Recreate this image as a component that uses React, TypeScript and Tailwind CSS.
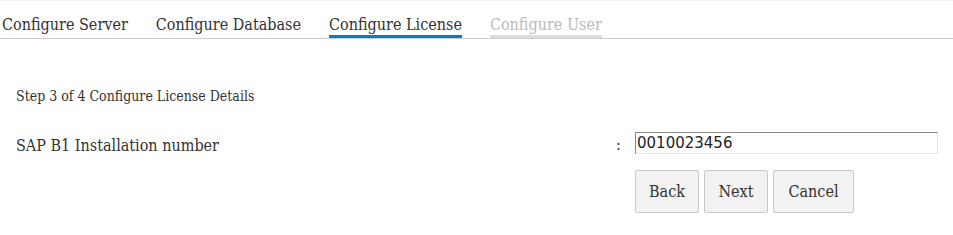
const serif = "font-['DejaVu_Serif_Condensed','DejaVu_Serif',serif] [font-stretch:condensed]";

type Tab = { label: string; state: "done" | "active" | "disabled" };

const tabs: Tab[] = [
  { label: "Configure Server", state: "done" },
  { label: "Configure Database", state: "done" },
  { label: "Configure License", state: "active" },
  { label: "Configure User", state: "disabled" },
];

function TabBar() {
  return (
    <div className="flex h-[38px] items-end gap-[28px] border-b border-[#cccccc] pl-[2px]">
      {tabs.map((t) => (
        <div
          key={t.label}
          className={`text-[16px] leading-[20px] border-b-[3px] ${
            t.state === "active"
              ? "border-[#0a7bc2] text-[#333333]"
              : t.state === "disabled"
              ? "border-[#dddddd] text-[#bbbbbb]"
              : "border-transparent text-[#333333]"
          }`}
        >
          {t.label}
        </div>
      ))}
    </div>
  );
}

export default function App() {
  return (
    <div className={`${serif} h-[235px] w-[953px] bg-white border-t border-[#f4f4f4]`}>
      <TabBar />
      <div className="pl-4 pt-[49px]">
        <p className="text-[14px] leading-4 text-[#333333]">
          Step 3 of 4 Configure License Details
        </p>
        <div className="mt-[28px] flex h-[22px] items-center">
          <label className="mt-[5px] w-[600px] text-[16px] leading-[22px] text-[#333333]">
            SAP B1 Installation number
          </label>
          <span className="mt-[4px] w-[19px] text-[16px] leading-[22px] text-[#333333]">:</span>
          <input
            defaultValue="0010023456"
            className="h-[22px] w-[303px] border border-t-[#888888] border-l-[#888888] border-r-[#e4e4e4] border-b-[#e4e4e4] bg-white px-[1px] font-['DejaVu_Sans',sans-serif] [font-stretch:normal] text-[15px] leading-5 text-[#222222] outline-none"
          />
        </div>
        <div className="ml-[619px] mt-[16px] flex gap-[5px]">
          {["Back", "Next", "Cancel"].map((b) => (
            <button
              key={b}
              type="button"
              className={`h-[43px] ${
                b === "Cancel" ? "w-[81px]" : "w-[64px]"
              } rounded-[2px] border border-[#c8c8c8] bg-[#f2f2f2] text-[16px] text-[#333333]`}
            >
              {b}
            </button>
          ))}
        </div>
      </div>
    </div>
  );
}
